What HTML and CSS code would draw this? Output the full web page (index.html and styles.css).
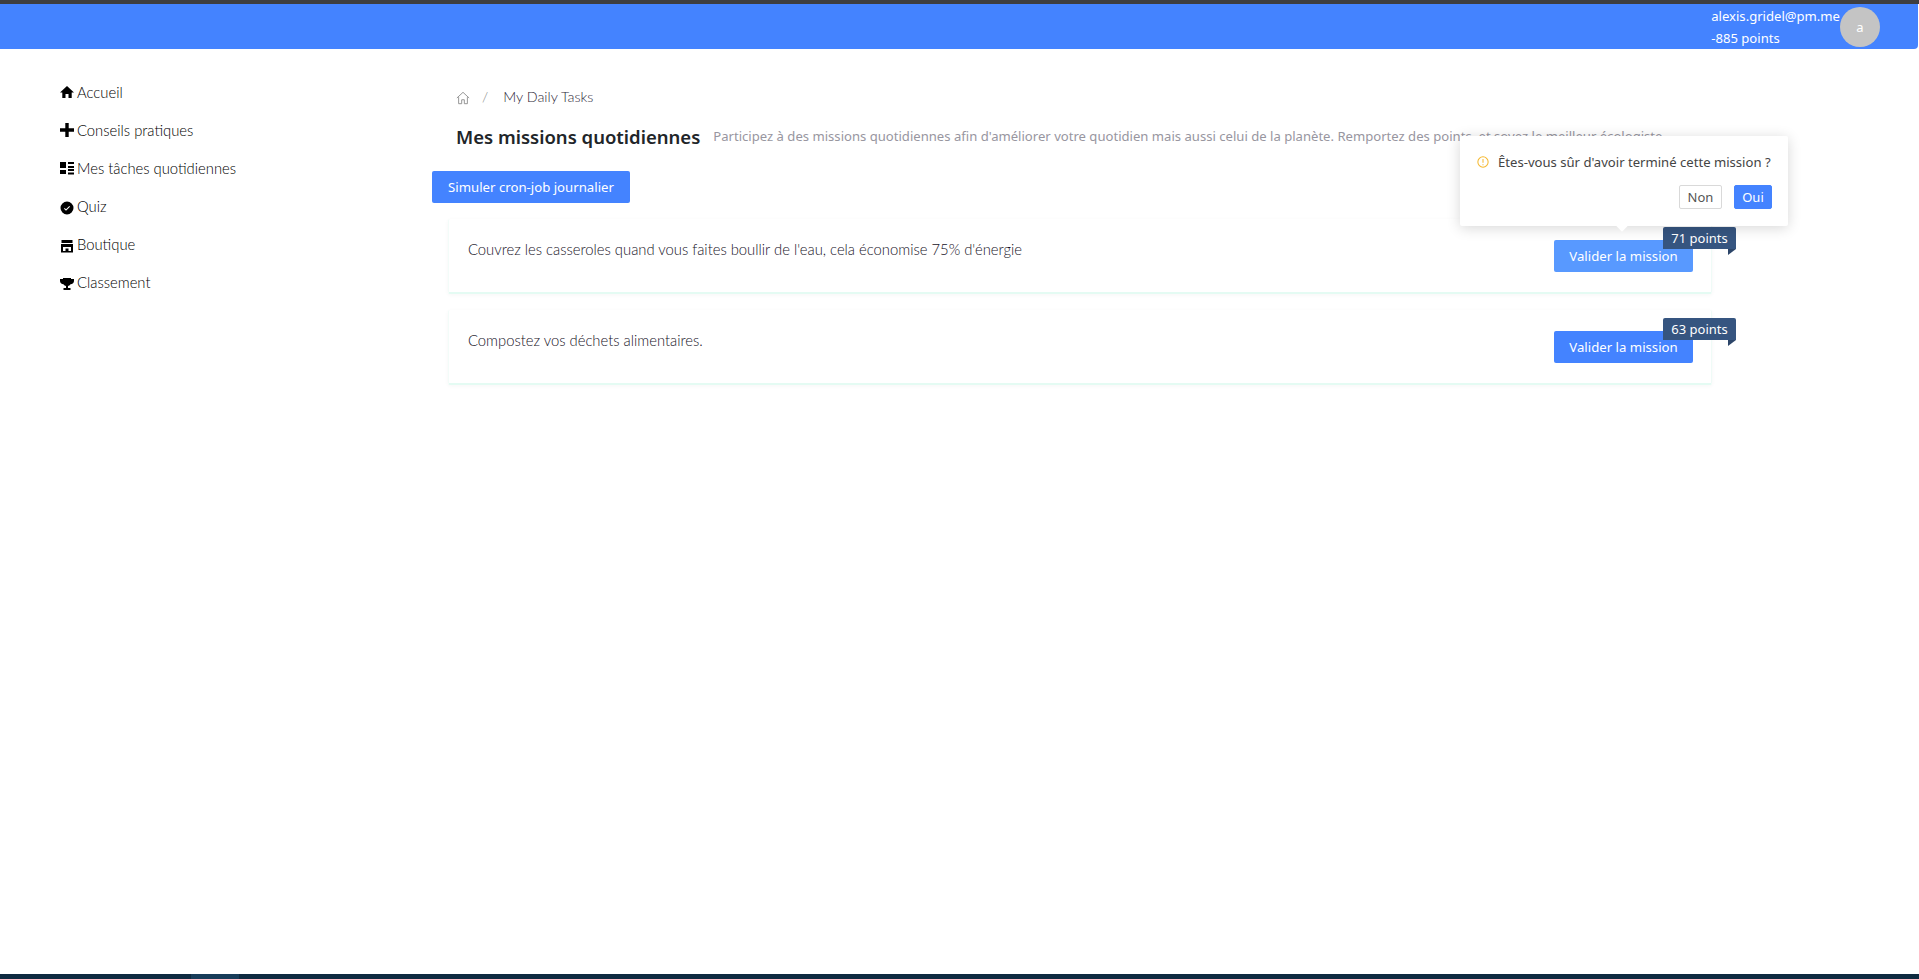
FILE: index.html
```html
<!DOCTYPE html>
<html lang="fr">
<head>
    <meta charset="UTF-8">
    <meta name="viewport" content="width=device-width, initial-scale=1.0">
    <title>Mes missions quotidiennes</title>
    <link rel="stylesheet" href="styles.css">
</head>
<body>
<div class="topline"></div>
<header class="header">
    <div class="user-info">
        <div>alexis.gridel@pm.me</div>
        <div>-885 points</div>
    </div>
    <div class="avatar">a</div>
</header>

<div class="layout">
    <nav class="sidebar">
        <a class="nav-item">
            <svg class="nav-icon" viewBox="0 0 14 14"><path d="M5.500 13V9h3v4h3.200V7.500H14L7 1 0 7.500h2.300V13z"/></svg>
            <span>Accueil</span>
        </a>
        <a class="nav-item">
            <svg class="nav-icon" viewBox="0 0 14 14"><path d="M5.300 0h3.400v5.300H14v3.400H8.700V14H5.300V8.700H0V5.300h5.300z"/></svg>
            <span>Conseils pratiques</span>
        </a>
        <a class="nav-item">
            <svg class="nav-icon" viewBox="0 0 14 14"><path d="M0 1h6v6H0zM0 9h6v4H0zM8 1h6v2H8zM8 5h6v2H8zM8 8h6v2H8zM8 11.500h6v2H8z"/></svg>
            <span>Mes tâches quotidiennes</span>
        </a>
        <a class="nav-item">
            <svg class="nav-icon low" viewBox="0 0 14 14"><path fill-rule="evenodd" d="M7 .500a6.500 6.500 0 1 0 0 13 6.500 6.500 0 0 0 0-13zM6 9.700 4 7.700l.7-.7L6 8.300 9.300 5l.7.700z"/></svg>
            <span>Quiz</span>
        </a>
        <a class="nav-item">
            <svg class="nav-icon low" viewBox="0 0 14 14"><path fill-rule="evenodd" d="M1.500 1h11v3h-11zM1 5h12v8.500H1zM3 8v4h2.500V9.500h3V12H11V8z"/></svg>
            <span>Boutique</span>
        </a>
        <a class="nav-item">
            <svg class="nav-icon low" viewBox="0 0 14 14"><path d="M3 1h8v1h3v2c0 2-1.500 3-3.500 3.300-.7 1-1.600 1.500-2.500 1.700V11h2.500v2h-7v-2H6V9c-.9-.2-1.800-.7-2.500-1.700C1.500 7 0 6 0 4V2h3z"/></svg>
            <span>Classement</span>
        </a>
    </nav>

    <main class="content">
        <div class="breadcrumb">
            <svg class="breadcrumb-home" viewBox="0 0 16 16"><path d="M1 8l7-6.500L15 8M3 7v7.500h3.500V10h3v4.500H13V7"/></svg>
            <span class="breadcrumb-sep">/</span>
            <span class="breadcrumb-current">My Daily Tasks</span>
        </div>
        <div class="page-title">
            <h1>Mes missions quotidiennes</h1>
            <p>Participez à des missions quotidiennes afin d'améliorer votre quotidien mais aussi celui de la planète. Remportez des points, et soyez le meilleur écologiste.</p>
        </div>
        <button class="btn cron-btn">Simuler cron-job journalier</button>

        <div class="mission">
            <p>Couvrez les casseroles quand vous faites boullir de l'eau, cela économise 75% d'énergie</p>
            <button class="btn validate-btn hovered">Valider la mission</button>
            <div class="ribbon">71 points</div>
            <div class="popconfirm">
                <div class="popconfirm-msg">
                    <svg class="warn-icon" viewBox="0 0 14 14"><circle cx="7" cy="7" r="6"/><path d="M7 3.500v4.500M7 9.500v1.200"/></svg>
                    <span>Êtes-vous sûr d'avoir terminé cette mission ?</span>
                </div>
                <div class="popconfirm-actions">
                    <button class="small-btn">Non</button>
                    <button class="small-btn primary">Oui</button>
                </div>
            </div>
        </div>

        <div class="mission">
            <p>Compostez vos déchets alimentaires.</p>
            <button class="btn validate-btn">Valider la mission</button>
            <div class="ribbon">63 points</div>
        </div>
    </main>
</div>

<footer class="footer">
    <div class="footer-mark"></div>
</footer>
</body>
</html>
```

FILE: styles.css
```css
:root {
    --blue: #4483ff;
    --ui-font: "Noto Sans", "Open Sans", sans-serif;
    --text-font: Lato, "Open Sans", sans-serif;
}

html {
    height: 100%;
}

body {
    margin: 0;
    min-height: 100%;
    height: 979px;
    display: flex;
    flex-direction: column;
    background: #fff;
    font-family: var(--ui-font);
    color: #333;
    overflow: hidden;
}

.topline {
    height: 4px;
    background: #3e3e40;
}

.header {
    height: 45px;
    display: flex;
    justify-content: flex-end;
    align-items: flex-start;
    background: var(--blue);
    border-bottom-right-radius: 4px;
    margin-right: 1px;
    padding-right: 38px;
    color: #fff;
    font-size: 13.100px;
}

.user-info {
    line-height: 22px;
    padding-top: 1px;
}

.avatar {
    width: 40px;
    height: 40px;
    margin-top: 3px;
    border-radius: 50%;
    background: #c4c4c4;
    font-size: 13px;
    line-height: 40px;
    text-align: center;
}

.layout {
    flex: 1;
    display: flex;
}

.sidebar {
    width: 432px;
    box-sizing: border-box;
    padding: 24px 0 0 60px;
}

.nav-item {
    height: 38px;
    display: flex;
    align-items: center;
    gap: 3px;
    font-family: var(--text-font);
    font-size: 14.800px;
    font-weight: 300;
    color: #000;
}

.nav-icon {
    width: 14px;
    height: 14px;
    fill: #000;
    flex: none;
}

.nav-icon.low {
    margin-top: 4px;
}

.content {
    flex: 1;
    padding-right: 207px;
}

.breadcrumb {
    display: flex;
    align-items: center;
    height: 20px;
    margin-top: 37px;
    padding-left: 24px;
    font-family: var(--text-font);
    font-size: 14.300px;
    font-weight: 300;
    color: #2e2838;
}

.breadcrumb-home {
    width: 14px;
    height: 14px;
    margin-top: 3px;
    fill: none;
    stroke: #888;
    stroke-width: 1;
}

.breadcrumb-sep {
    margin: 0 15px 0 12px;
    color: #888;
}

.page-title {
    display: flex;
    align-items: center;
    gap: 13px;
    height: 26px;
    margin-top: 17px;
    padding-left: 24px;
    white-space: nowrap;
}

.page-title h1 {
    margin: 0;
    font-size: 18.500px;
    font-weight: 600;
    color: #212529;
}

.page-title p {
    margin: 0;
    font-size: 13.100px;
    color: #98969f;
}

.btn {
    border: 0;
    border-radius: 2px;
    background: var(--blue);
    color: #fff;
    font-family: var(--ui-font);
    font-size: 13.200px;
    height: 32px;
    padding: 0;
}

.cron-btn {
    display: block;
    width: 198px;
    margin-top: 22px;
}

.mission {
    position: relative;
    height: 75px;
    box-sizing: border-box;
    margin: 16px 0 0 16px;
    padding: 21px 18px 0 19px;
    display: flex;
    justify-content: space-between;
    border-bottom: 2px solid #e4fbf3;
    border-right: 1px solid #effbf7;
    border-left: 1px solid #f3fcf9;
    border-radius: 2px;
    box-shadow: 0 1px 4px rgba(0, 0, 0, 0.04);
}

.mission p {
    margin: 0;
    font-family: var(--text-font);
    font-size: 14.800px;
    font-weight: 300;
    line-height: 18px;
    color: #17131f;
}

.validate-btn {
    width: 139px;
}

.validate-btn.hovered {
    background: #5899ff;
}

.ribbon {
    position: absolute;
    top: 8px;
    right: -25px;
    width: 73px;
    height: 22px;
    border-radius: 2px 2px 0 0;
    background: #365580;
    color: #fff;
    font-size: 13px;
    line-height: 22px;
    text-align: center;
}

.ribbon::after {
    content: "";
    position: absolute;
    right: 0;
    top: 22px;
    border-top: 6px solid #2c4569;
    border-right: 8px solid transparent;
}

.popconfirm {
    position: absolute;
    top: -83px;
    right: -77px;
    width: 328px;
    height: 90px;
    box-sizing: border-box;
    padding: 17px 16px 12px 17px;
    background: #fff;
    border-radius: 2px;
    box-shadow: 0 2px 14px rgba(0, 0, 0, 0.16);
    z-index: 5;
    font-size: 13.100px;
    color: #444;
}

.popconfirm::after {
    content: "";
    position: absolute;
    left: 158px;
    bottom: -4px;
    width: 8px;
    height: 8px;
    background: #fff;
    transform: rotate(45deg);
}

.popconfirm-msg {
    display: flex;
    align-items: center;
    gap: 9px;
    white-space: nowrap;
}

.warn-icon {
    width: 12px;
    height: 12px;
    fill: none;
    stroke: #f5b82e;
    stroke-width: 1.200;
}

.popconfirm-actions {
    display: flex;
    justify-content: flex-end;
    gap: 12px;
    margin-top: 14px;
}

.small-btn {
    width: 43px;
    height: 24px;
    padding: 0;
    border: 1px solid #d9d9d9;
    border-radius: 2px;
    background: #fff;
    color: #555;
    font-family: var(--ui-font);
    font-size: 13px;
}

.small-btn.primary {
    width: 38px;
    border-color: var(--blue);
    background: var(--blue);
    color: #fff;
}

.footer {
    height: 5px;
    background: #0e2a40;
    padding-left: 191px;
}

.footer-mark {
    width: 48px;
    height: 5px;
    background: #173c59;
}
```
